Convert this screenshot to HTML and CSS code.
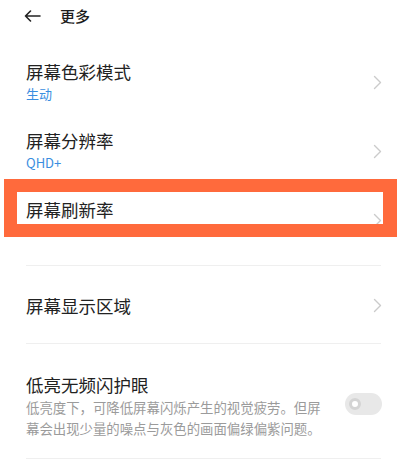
FILE: index.html
```html
<!DOCTYPE html>
<html lang="zh-CN">
<head>
<meta charset="utf-8">
<link rel="stylesheet" href="styles.css">
</head>
<body>
<div class="page">
  <header class="header">
    <svg class="back" width="17" height="12" viewBox="0 0 17 12"><path d="M16 6H1.5M6.5 1L1.5 6l5 5" fill="none" stroke="#222" stroke-width="1.6" stroke-linecap="round" stroke-linejoin="round"/></svg>
    <span class="header-title">更多</span>
  </header>
  <div class="list">
    <div class="row">
      <div class="text">
        <div class="title">屏幕色彩模式</div>
        <div class="sub">生动</div>
      </div>
      <svg class="chev" width="9" height="15" viewBox="0 0 9 15"><path d="M1.5 1.5l6 6-6 6" fill="none" stroke="#cbcbcb" stroke-width="1.4" stroke-linecap="round" stroke-linejoin="round"/></svg>
    </div>
    <div class="row">
      <div class="text">
        <div class="title">屏幕分辨率</div>
        <div class="sub">QHD+</div>
      </div>
      <svg class="chev" width="9" height="15" viewBox="0 0 9 15"><path d="M1.5 1.5l6 6-6 6" fill="none" stroke="#cbcbcb" stroke-width="1.4" stroke-linecap="round" stroke-linejoin="round"/></svg>
    </div>
    <div class="row highlighted">
      <div class="text tall">
        <div class="title">屏幕刷新率</div>
      </div>
      <svg class="chev" width="9" height="15" viewBox="0 0 9 15"><path d="M1.5 1.5l6 6-6 6" fill="none" stroke="#cbcbcb" stroke-width="1.4" stroke-linecap="round" stroke-linejoin="round"/></svg>
      <div class="mark"></div>
    </div>
    <div class="divider first"></div>
    <div class="row single">
      <div class="text">
        <div class="title">屏幕显示区域</div>
      </div>
      <svg class="chev" width="9" height="15" viewBox="0 0 9 15"><path d="M1.5 1.5l6 6-6 6" fill="none" stroke="#cbcbcb" stroke-width="1.4" stroke-linecap="round" stroke-linejoin="round"/></svg>
    </div>
    <div class="divider"></div>
    <div class="row switch-row">
      <div class="text">
        <div class="title">低亮无频闪护眼</div>
        <div class="desc">低亮度下，可降低屏幕闪烁产生的视觉疲劳。但屏幕会出现少量的噪点与灰色的画面偏绿偏紫问题。</div>
      </div>
      <div class="toggle"><div class="knob"></div></div>
    </div>
    <div class="divider"></div>
  </div>
</div>
</body>
</html>
```
FILE: styles.css
```css
html, body {
  margin: 0;
  padding: 0;
  background: #ffffff;
}
body {
  font-family: "Noto Sans CJK SC", "Noto Sans", sans-serif;
  color: #222222;
}
.page {
  width: 405px;
  height: 463px;
  overflow: hidden;
}
.header {
  height: 32px;
  display: flex;
  align-items: center;
  padding-left: 24px;
}
.back {
  display: block;
}
.header-title {
  margin-left: 19px;
  font-size: 15px;
  line-height: 20px;
  font-weight: 500;
  color: #1c1c1c;
}
.list {
  padding: 15px 24px 0 26px;
}
.row {
  display: flex;
  align-items: center;
  justify-content: space-between;
  padding: 13px 0 12px;
}
.text {
  display: flex;
  flex-direction: column;
}
.text.tall {
  min-height: 44px;
}
.title {
  font-size: 17.5px;
  line-height: 24px;
  color: #222222;
}
.sub {
  font-size: 13px;
  line-height: 20px;
  color: #3a8ee0;
}
.chev {
  display: block;
  margin-right: -1px;
}
.highlighted {
  position: relative;
}
.mark {
  position: absolute;
  left: -22px;
  top: -6px;
  width: 393px;
  height: 58px;
  box-sizing: border-box;
  border: 13px solid #ff6a3c;
  border-right-width: 14px;
}
.divider {
  height: 1px;
  background: #efefef;
}
.divider.first {
  margin-top: 11px;
}
.single {
  padding: 28px 0 25px;
}
.single .chev {
  margin-top: -2px;
}
.switch-row {
  padding: 29px 0 19px;
}
.switch-row .text {
  width: 300px;
}
.desc {
  font-size: 13.4px;
  line-height: 21px;
  color: #9b9b9b;
}
.toggle {
  width: 37px;
  height: 22px;
  border-radius: 11px;
  background: #e8e8e8;
  position: relative;
  margin-bottom: 4px;
  margin-right: -1px;
}
.knob {
  position: absolute;
  left: 4px;
  top: 5px;
  width: 12px;
  height: 12px;
  box-sizing: border-box;
  border-radius: 50%;
  background: #ffffff;
  border: 3px solid #d4d4d4;
}
```
